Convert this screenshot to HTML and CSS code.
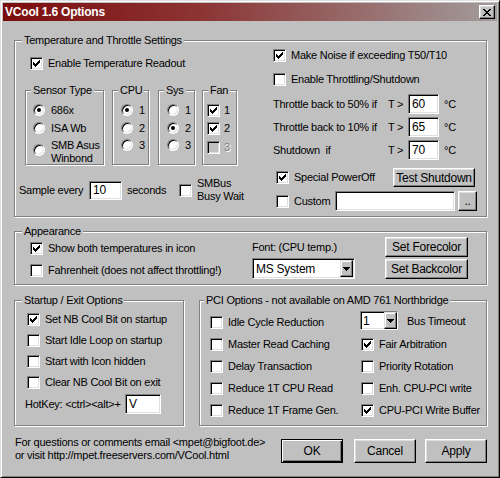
FILE: index.html
```html
<!DOCTYPE html>
<html lang="en">
<head>
<meta charset="utf-8">
<title>VCool 1.6 Options</title>
<link rel="stylesheet" href="styles.css">
</head>
<body>
<div class="window">
  <div class="titlebar">
    <span class="title">VCool 1.6 Options</span>
    <span class="close"><svg width="8" height="7" viewBox="0 0 8 7" shape-rendering="crispEdges"><path d="M0 0h2v1h-2zM6 0h2v1h-2zM1 1h2v1h-2zM5 1h2v1h-2zM2 2h4v1h-4zM3 3h2v1h-2zM2 4h4v1h-4zM1 5h2v1h-2zM5 5h2v1h-2zM0 6h2v1h-2zM6 6h2v1h-2z"/></svg></span>
  </div>

  <div class="client">
    <fieldset class="group g-temp">
      <legend>Temperature and Throttle Settings</legend>
      <div class="temp-cols">
        <div class="temp-left">
          <label class="check c-readout"><span class="box"><svg width="7" height="7" viewBox="0 0 7 7" shape-rendering="crispEdges"><path d="M0 2h1v1h1v1h1v-1h1v-1h1v-1h1v-1h1v3h-1v1h-1v1h-1v1h-1v1h-1v-1h-1v-1h-1z"/></svg></span><span>Enable Temperature Readout</span></label>

          <div class="subgroups">
            <fieldset class="group sub sub-sensor">
              <legend>Sensor Type</legend>
              <div class="opts">
                <label class="radio"><span class="dot on"></span><span>686x</span></label>
                <label class="radio"><span class="dot"></span><span>ISA Wb</span></label>
                <label class="radio two"><span class="dot"></span><span>SMB Asus<br>Winbond</span></label>
              </div>
            </fieldset>
            <fieldset class="group sub sub-cpu">
              <legend>CPU</legend>
              <div class="opts">
                <label class="radio"><span class="dot on"></span><span>1</span></label>
                <label class="radio"><span class="dot"></span><span>2</span></label>
                <label class="radio r3"><span class="dot"></span><span>3</span></label>
              </div>
            </fieldset>
            <fieldset class="group sub sub-sys">
              <legend>Sys</legend>
              <div class="opts">
                <label class="radio"><span class="dot"></span><span>1</span></label>
                <label class="radio"><span class="dot on"></span><span>2</span></label>
                <label class="radio r3"><span class="dot"></span><span>3</span></label>
              </div>
            </fieldset>
            <fieldset class="group sub sub-fan">
              <legend>Fan</legend>
              <div class="fan-opts">
                <label class="check"><span class="box"><svg width="7" height="7" viewBox="0 0 7 7" shape-rendering="crispEdges"><path d="M0 2h1v1h1v1h1v-1h1v-1h1v-1h1v-1h1v3h-1v1h-1v1h-1v1h-1v1h-1v-1h-1v-1h-1z"/></svg></span><span>1</span></label>
                <label class="check"><span class="box"><svg width="7" height="7" viewBox="0 0 7 7" shape-rendering="crispEdges"><path d="M0 2h1v1h1v1h1v-1h1v-1h1v-1h1v-1h1v3h-1v1h-1v1h-1v1h-1v1h-1v-1h-1v-1h-1z"/></svg></span><span>2</span></label>
                <label class="check disabled"><span class="box"></span><span>3</span></label>
              </div>
            </fieldset>
          </div>

          <div class="sample-row">
            <span class="lbl-sample">Sample every</span>
            <span class="field f-sample">10</span>
            <span class="lbl-seconds">seconds</span>
            <label class="check c-smbus"><span class="box"></span><span>SMBus<br>Busy Wait</span></label>
          </div>
        </div>

        <div class="temp-right">
          <label class="check c-noise"><span class="box"><svg width="7" height="7" viewBox="0 0 7 7" shape-rendering="crispEdges"><path d="M0 2h1v1h1v1h1v-1h1v-1h1v-1h1v-1h1v3h-1v1h-1v1h-1v1h-1v1h-1v-1h-1v-1h-1z"/></svg></span><span>Make Noise if exceeding T50/T10</span></label>
          <label class="check c-throttle"><span class="box"></span><span>Enable Throttling/Shutdown</span></label>

          <div class="t-row t-first">
            <span class="t-label">Throttle back to 50% if</span>
            <span class="t-gt">T &gt;</span>
            <span class="field f-temp">60</span>
            <span class="t-unit">°C</span>
          </div>
          <div class="t-row">
            <span class="t-label">Throttle back to 10% if</span>
            <span class="t-gt">T &gt;</span>
            <span class="field f-temp">65</span>
            <span class="t-unit">°C</span>
          </div>
          <div class="t-row">
            <span class="t-label">Shutdown&nbsp; if</span>
            <span class="t-gt">T &gt;</span>
            <span class="field f-temp">70</span>
            <span class="t-unit">°C</span>
          </div>

          <div class="r-power">
            <label class="check c-power"><span class="box"><svg width="7" height="7" viewBox="0 0 7 7" shape-rendering="crispEdges"><path d="M0 2h1v1h1v1h1v-1h1v-1h1v-1h1v-1h1v3h-1v1h-1v1h-1v1h-1v1h-1v-1h-1v-1h-1z"/></svg></span><span>Special PowerOff</span></label>
            <span class="btn b-test">Test Shutdown</span>
          </div>
          <div class="r-custom">
            <label class="check c-custom"><span class="box"></span><span>Custom</span></label>
            <span class="field f-custom"></span>
            <span class="btn b-dots">..</span>
          </div>
        </div>
      </div>
    </fieldset>

    <fieldset class="group g-app">
      <legend>Appearance</legend>
      <div class="app-cols">
        <div class="app-left">
          <label class="check"><span class="box"><svg width="7" height="7" viewBox="0 0 7 7" shape-rendering="crispEdges"><path d="M0 2h1v1h1v1h1v-1h1v-1h1v-1h1v-1h1v3h-1v1h-1v1h-1v1h-1v1h-1v-1h-1v-1h-1z"/></svg></span><span>Show both temperatures in icon</span></label>
          <label class="check c-fahr"><span class="box"></span><span>Fahrenheit (does not affect throttling!)</span></label>
        </div>
        <div class="app-mid">
          <div class="font-lbl">Font: (CPU temp.)</div>
          <div class="combo c-font"><span class="combo-text">MS System</span><span class="combo-btn"><svg width="7" height="4" viewBox="0 0 7 4" shape-rendering="crispEdges"><path d="M0 0h7v1h-1v1h-1v1h-1v1h-1v-1h-1v-1h-1v-1h-1z"/></svg></span></div>
        </div>
        <div class="app-right">
          <span class="btn b-color">Set Forecolor</span>
          <span class="btn b-color">Set Backcolor</span>
        </div>
      </div>
    </fieldset>

    <div class="bottom-row">
      <fieldset class="group g-startup">
        <legend>Startup / Exit Options</legend>
        <div class="startup-list">
          <label class="check"><span class="box"><svg width="7" height="7" viewBox="0 0 7 7" shape-rendering="crispEdges"><path d="M0 2h1v1h1v1h1v-1h1v-1h1v-1h1v-1h1v3h-1v1h-1v1h-1v1h-1v1h-1v-1h-1v-1h-1z"/></svg></span><span>Set NB Cool Bit on startup</span></label>
          <label class="check"><span class="box"></span><span>Start Idle Loop on startup</span></label>
          <label class="check"><span class="box"></span><span>Start with Icon hidden</span></label>
          <label class="check"><span class="box"></span><span>Clear NB Cool Bit on exit</span></label>
          <div class="hotkey-row">
            <span class="lbl-hotkey">HotKey: &lt;ctrl&gt;&lt;alt&gt;+</span>
            <span class="field f-hotkey">V</span>
          </div>
        </div>
      </fieldset>

      <fieldset class="group g-pci">
        <legend>PCI Options - not available on AMD 761 Northbridge</legend>
        <div class="pci-grid">
          <label class="check"><span class="box"></span><span>Idle Cycle Reduction</span></label>
          <div class="bus-cell">
            <div class="combo c-bus"><span class="combo-text">1</span><span class="combo-btn"><svg width="7" height="4" viewBox="0 0 7 4" shape-rendering="crispEdges"><path d="M0 0h7v1h-1v1h-1v1h-1v1h-1v-1h-1v-1h-1v-1h-1z"/></svg></span></div>
            <span class="lbl-bus">Bus Timeout</span>
          </div>
          <label class="check"><span class="box"></span><span>Master Read Caching</span></label>
          <label class="check"><span class="box"><svg width="7" height="7" viewBox="0 0 7 7" shape-rendering="crispEdges"><path d="M0 2h1v1h1v1h1v-1h1v-1h1v-1h1v-1h1v3h-1v1h-1v1h-1v1h-1v1h-1v-1h-1v-1h-1z"/></svg></span><span>Fair Arbitration</span></label>
          <label class="check"><span class="box"></span><span>Delay Transaction</span></label>
          <label class="check"><span class="box"></span><span>Priority Rotation</span></label>
          <label class="check"><span class="box"></span><span>Reduce 1T CPU Read</span></label>
          <label class="check"><span class="box"></span><span>Enh. CPU-PCI write</span></label>
          <label class="check"><span class="box"></span><span>Reduce 1T Frame Gen.</span></label>
          <label class="check"><span class="box"><svg width="7" height="7" viewBox="0 0 7 7" shape-rendering="crispEdges"><path d="M0 2h1v1h1v1h1v-1h1v-1h1v-1h1v-1h1v3h-1v1h-1v1h-1v1h-1v1h-1v-1h-1v-1h-1z"/></svg></span><span>CPU-PCI Write Buffer</span></label>
        </div>
      </fieldset>
    </div>

    <div class="footer">
      <div class="contact">For questions or comments email &lt;mpet@bigfoot.de&gt;<br>or visit http://mpet.freeservers.com/VCool.html</div>
      <span class="btn btn-default b-ok">OK</span>
      <span class="btn b-cancel">Cancel</span>
      <span class="btn b-apply">Apply</span>
    </div>
  </div>
</div>
</body>
</html>
```
FILE: styles.css
```css
* { box-sizing: border-box; }

html, body { margin: 0; padding: 0; }

body {
  width: 500px;
  height: 478px;
  overflow: hidden;
  background: #c0c0c0;
  color: #000;
  font-family: "Liberation Sans", Arial, sans-serif;
  font-size: 11px;
  letter-spacing: -0.25px;
}

/* ---- window frame ---- */
.window {
  width: 500px;
  height: 478px;
  padding: 2px;
  background: #c0c0c0;
  border: 1px solid;
  border-color: #dfdfdf #000 #000 #dfdfdf;
  box-shadow: inset 1px 1px #fff, inset -1px -1px #808080;
}

.titlebar {
  height: 18px;
  display: flex;
  align-items: center;
  justify-content: space-between;
  padding: 0 2px;
  background: linear-gradient(to right, #7c0c0c 0%, #8c3434 40%, #a29c9c 100%);
}

.title {
  color: #fff;
  font-weight: bold;
  font-size: 12px;
  letter-spacing: -0.2px;
}

.close {
  width: 16px;
  height: 14px;
  display: flex;
  align-items: center;
  justify-content: center;
  background: #c0c0c0;
  border: 1px solid;
  border-color: #fff #000 #000 #fff;
  box-shadow: inset -1px -1px #808080, inset 1px 1px #dfdfdf;
}

.client { padding-left: 11px; }

/* ---- etched group boxes ---- */
.group {
  margin: 0;
  padding: 0;
  min-width: 0;
  border: 1px solid #808080;
  box-shadow: 1px 1px 0 #fff, inset 1px 1px 0 #fff;
}

.group > legend {
  margin-left: 7px;
  padding: 0 2px;
  line-height: 13px;
  background: #c0c0c0;
}

/* ---- common controls ---- */
.check {
  display: flex;
  align-items: center;
  gap: 5px;
  height: 13px;
  line-height: 13px;
  white-space: nowrap;
}

.box {
  flex: none;
  width: 13px;
  height: 13px;
  display: flex;
  align-items: center;
  justify-content: center;
  background: #fff;
  border: 1px solid;
  border-color: #808080 #fff #fff #808080;
  box-shadow: inset 1px 1px #000, inset -1px -1px #dfdfdf;
}

.disabled .box { background: #c0c0c0; }
.disabled { color: #808080; text-shadow: 1px 1px 0 #fff; }

.radio {
  display: flex;
  align-items: center;
  gap: 6px;
  height: 12px;
  line-height: 12px;
  white-space: nowrap;
}

.dot {
  flex: none;
  position: relative;
  width: 12px;
  height: 12px;
  border-radius: 50%;
  background: #fff;
  border: 1px solid;
  border-color: #808080 #fff #fff #808080;
  box-shadow: inset 1px 1px #000, inset -1px -1px #dfdfdf;
}

.dot.on::after {
  content: "";
  position: absolute;
  left: 3px;
  top: 3px;
  width: 4px;
  height: 4px;
  border-radius: 50%;
  background: #000;
}

.field {
  display: flex;
  align-items: center;
  padding-left: 3px;
  background: #fff;
  border: 1px solid;
  border-color: #808080 #fff #fff #808080;
  box-shadow: inset 1px 1px #000, inset -1px -1px #dfdfdf;
  font-size: 12px;
}

.btn {
  display: flex;
  align-items: center;
  justify-content: center;
  background: #c0c0c0;
  border: 1px solid;
  border-color: #fff #000 #000 #fff;
  box-shadow: inset -1px -1px #808080, inset 1px 1px #dfdfdf;
  white-space: nowrap;
  font-size: 12px;
}

.btn-default {
  border: 1px solid #000;
  box-shadow: inset 1px 1px #fff, inset -1px -1px #000, inset -2px -2px #808080;
}

.combo {
  display: flex;
  align-items: center;
  padding: 1px;
  background: #fff;
  border: 1px solid;
  border-color: #808080 #fff #fff #808080;
  box-shadow: inset 1px 1px #000, inset -1px -1px #dfdfdf;
}

.combo-text { flex: 1; padding-left: 2px; font-size: 12px; }

.combo-btn {
  flex: none;
  width: 13px;
  height: 100%;
  display: flex;
  align-items: center;
  justify-content: center;
  background: #c0c0c0;
  border: 1px solid;
  border-color: #dfdfdf #000 #000 #dfdfdf;
  box-shadow: inset -1px -1px #808080, inset 1px 1px #fff;
}

/* ---- temperature & throttle ---- */
.g-temp { margin-top: 13px; width: 473px; height: 183px; }

.temp-cols { display: flex; }
.temp-left { width: 258px; flex: none; }
.temp-right { flex: 1; }

.c-readout { margin: 10px 0 0 15px; }

.subgroups { display: flex; margin: 14px 0 0 10px; }
.sub { height: 81px; }
.sub > legend { margin-left: 5px; }
.sub-sensor { width: 79px; }
.sub-cpu { width: 37px; margin-left: 8px; }
.sub-sys { width: 37px; margin-left: 9px; }
.sub-fan { width: 35px; margin-left: 7px; }

.opts { display: flex; flex-direction: column; padding: 7px 0 0 7px; }
.sub-cpu .opts, .sub-sys .opts { padding-left: 8px; gap: 0; }
.opts .radio + .radio { margin-top: 6px; }
.opts .radio.r3 { margin-top: 5px; }
.opts .radio.two {
  margin-top: 5px;
  height: auto;
  align-items: flex-start;
  line-height: 13px;
}
.opts .radio.two .dot { margin-top: 5px; }

.fan-opts { display: flex; flex-direction: column; padding: 7px 0 0 4px; }
.fan-opts .check { gap: 4px; }
.fan-opts .check + .check { margin-top: 5px; }
.fan-opts .check.disabled { margin-top: 6px; }

.sample-row {
  display: flex;
  align-items: center;
  height: 26px;
  margin-top: 12px;
  padding-left: 4px;
}
.lbl-sample { width: 70px; }
.f-sample { width: 33px; height: 19px; }
.lbl-seconds { width: 52px; margin-left: 5px; }
.c-smbus { height: 26px; }

.c-noise { margin-top: 2px; }
.c-throttle { margin-top: 11px; }

.t-row { display: flex; align-items: center; height: 20px; margin-top: 3px; }
.t-row.t-first { margin-top: 8px; }
.t-label { width: 115px; white-space: nowrap; }
.t-gt { width: 20px; }
.f-temp { width: 31px; height: 20px; }
.t-unit { margin-left: 5px; }

.r-power { display: flex; align-items: center; height: 19px; margin-top: 8px; }
.c-power { width: 120px; padding-left: 3px; }
.b-test { width: 82px; height: 19px; }

.r-custom { display: flex; align-items: center; height: 20px; margin-top: 4px; }
.c-custom { width: 62px; padding-left: 3px; }
.f-custom { width: 120px; height: 20px; }
.b-dots { width: 19px; height: 20px; margin-left: 3px; }

/* ---- appearance ---- */
.g-app { margin-top: 8px; width: 473px; height: 60px; }

.app-cols { display: flex; }
.app-left { width: 237px; flex: none; padding-left: 15px; padding-top: 4px; }
.c-fahr { margin-top: 9px; }

.app-mid { width: 133px; flex: none; }
.font-lbl { margin-top: 3px; line-height: 13px; }
.c-font { width: 103px; height: 21px; margin-top: 4px; }

.app-right { display: flex; flex-direction: column; gap: 2px; margin-top: -1px; }
.b-color { width: 83px; height: 20px; }

/* ---- startup / pci ---- */
.bottom-row { display: flex; margin-top: 9px; }

.g-startup { width: 170px; height: 132px; }
.startup-list { display: flex; flex-direction: column; gap: 8px; padding: 6px 0 0 12px; }

.hotkey-row { display: flex; align-items: center; height: 20px; margin: -3px 0 0 -2px; }
.lbl-hotkey { width: 100px; white-space: nowrap; }
.f-hotkey { width: 36px; height: 20px; }

.g-pci { width: 288px; height: 132px; margin-left: 15px; }
.g-pci > legend { margin-left: 4px; }

.pci-grid {
  display: grid;
  grid-template-columns: 151px auto;
  grid-template-rows: repeat(5, 13px);
  row-gap: 9px;
  padding: 9px 0 0 10px;
}

.bus-cell { display: flex; align-items: center; align-self: center; margin: 0 0 4px -1px; }
.c-bus { width: 38px; height: 19px; padding: 0; }
.lbl-bus { margin-left: 9px; white-space: nowrap; }

/* ---- footer ---- */
.footer { display: flex; align-items: flex-start; margin-top: 10px; }
.contact { width: 267px; padding-left: 1px; line-height: 13px; white-space: nowrap; }
.b-ok, .b-cancel, .b-apply { width: 62px; height: 24px; margin-top: 3px; }
.b-cancel { margin-left: 11px; }
.b-apply { margin-left: 9px; }
```
